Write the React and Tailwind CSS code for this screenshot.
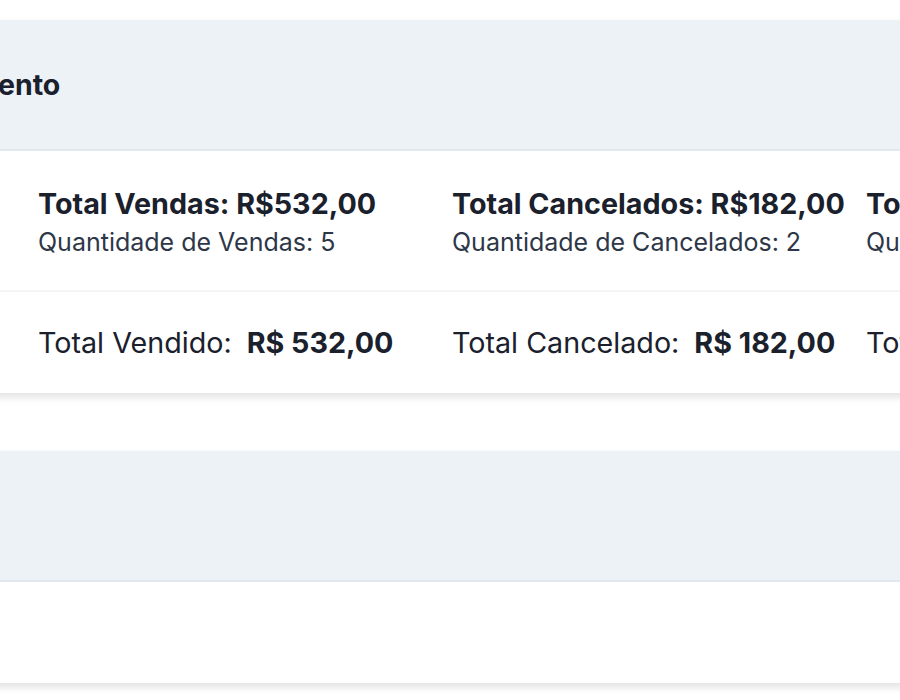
export default function App() {
  const font = { fontFamily: "Inter, 'Noto Sans', sans-serif" };
  return (
    <div className="w-[900px] h-[700px] overflow-hidden bg-white text-[#1a202c]" style={font}>
      <div className="ml-[-21px] w-[1400px] pt-[20px] flex flex-col gap-[58px]">
        <div className="bg-white shadow-[0_4px_8px_rgba(0,0,0,0.12)]">
          <div className="h-[131px] bg-[#edf2f7] border-b-2 border-[#e2e8f0] flex items-center">
            <h2 className="ml-[-91px] text-[28.5px] font-bold leading-none pt-[2px]">Fechamento</h2>
          </div>
          <div className="h-[141px] border-b-2 border-[#f4f5f7] flex items-center pl-[59px]">
            <div className="w-[414px] flex flex-col gap-[6px] pt-[2px]">
              <div className="text-[28.7px] font-bold leading-[34px] whitespace-nowrap">Total Vendas: R$532,00</div>
              <div className="text-[25px] text-[#2d3748] leading-[30px] whitespace-nowrap">Quantidade de Vendas: 5</div>
            </div>
            <div className="w-[414px] flex flex-col gap-[6px] pt-[2px]">
              <div className="text-[28.7px] font-bold leading-[34px] whitespace-nowrap">Total Cancelados: R$182,00</div>
              <div className="text-[25px] text-[#2d3748] leading-[30px] whitespace-nowrap">Quantidade de Cancelados: 2</div>
            </div>
            <div className="w-[414px] flex flex-col gap-[6px] pt-[2px]">
              <div className="text-[28.7px] font-bold leading-[34px] whitespace-nowrap">Total Geral: R$714,00</div>
              <div className="text-[25px] text-[#2d3748] leading-[30px] whitespace-nowrap">Quantidade Total: 7</div>
            </div>
          </div>
          <div className="h-[101px] flex items-center pl-[59px] text-[28.7px]">
            <div className="w-[414px] flex items-baseline whitespace-nowrap">
              <span>Total Vendido:</span>
              <span className="ml-[15px] font-bold">R$ 532,00</span>
            </div>
            <div className="w-[414px] flex items-baseline whitespace-nowrap">
              <span>Total Cancelado:</span>
              <span className="ml-[15px] font-bold">R$ 182,00</span>
            </div>
            <div className="w-[414px] flex items-baseline whitespace-nowrap">
              <span>Total Geral:</span>
              <span className="ml-[15px] font-bold">R$ 714,00</span>
            </div>
          </div>
        </div>
        <div className="bg-white shadow-[0_4px_8px_rgba(0,0,0,0.12)]">
          <div className="h-[131px] bg-[#edf2f7] border-b-2 border-[#e2e8f0]"></div>
          <div className="h-[101px]"></div>
        </div>
      </div>
    </div>
  );
}
